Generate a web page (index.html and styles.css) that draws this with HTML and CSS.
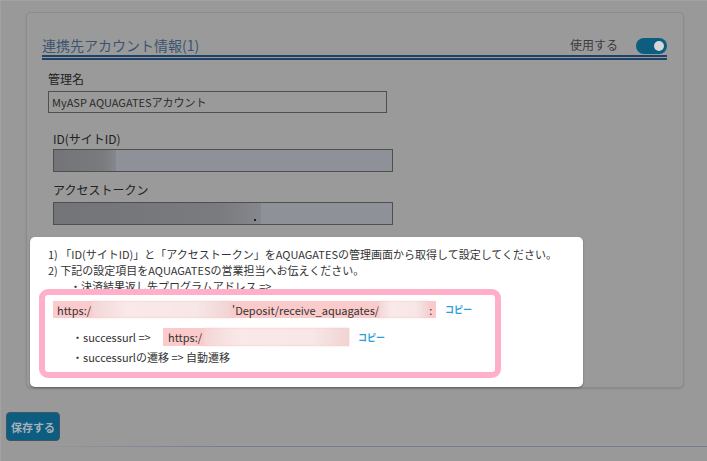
FILE: index.html
```html
<!DOCTYPE html>
<html lang="ja">
<head>
<meta charset="utf-8">
<title>連携先アカウント情報</title>
<link rel="stylesheet" href="styles.css">
</head>
<body>
<div class="page">
  <section class="card">
    <div class="card-head">
      <h2 class="card-title">連携先アカウント情報(1)</h2>
      <div class="use">
        <span class="use-label">使用する</span>
        <span class="toggle"><span class="knob"></span></span>
      </div>
    </div>
    <div class="field f-name">
      <label class="label">管理名</label>
      <div class="input">MyASP AQUAGATESアカウント</div>
    </div>
    <div class="field f-id">
      <label class="label">ID(サイトID)</label>
      <div class="input input-disabled"><span class="masked m-id"></span></div>
    </div>
    <div class="field f-token">
      <label class="label">アクセストークン</label>
      <div class="input input-disabled"><span class="masked m-token"></span><span class="dot"></span></div>
    </div>
  </section>
  <div class="footer"><button class="save">保存する</button></div>
  <div class="rule"></div>

  <div class="popover">
    <p class="pline">1) 「ID(サイトID)」と「アクセストークン」をAQUAGATESの管理画面から取得して設定してください。</p>
    <p class="pline">2) 下記の設定項目をAQUAGATESの営業担当へお伝えください。</p>
    <p class="pline indent">・決済結果返し先プログラムアドレス =&gt;</p>
    <div class="highlight">
      <div class="row row-url">
        <span class="url url1">https:/<span class="blur b1"></span>'Deposit/receive_aquagates/<span class="blur b2"></span>:</span>
        <span class="copy">コピー</span>
      </div>
      <div class="row row-success">
        <span class="item item-fixed">・successurl =&gt;</span>
        <span class="url url2">https:/<span class="blur b3"></span></span>
        <span class="copy">コピー</span>
      </div>
      <div class="row row-trans">
        <span class="item">・successurlの遷移 =&gt; 自動遷移</span>
      </div>
    </div>
  </div>
</div>
</body>
</html>
```

FILE: styles.css
```css
* { box-sizing: border-box; }

html, body {
  margin: 0;
  padding: 0;
}

body {
  background: #999999;
  font-family: "Noto Sans CJK JP", "Noto Sans", sans-serif;
  color: #222;
  min-height: 100vh;
  box-shadow: inset 1px 1px 0 #a2a2a2;
}

.page {
  position: relative;
  width: 707px;
  height: 461px;
  padding-top: 12px;
}

/* ---------- card ---------- */
.card {
  margin-left: 26px;
  width: 658px;
  height: 376px;
  background: #9a9a9a;
  border: 1px solid #8c8c8c;
  border-radius: 5px;
  box-shadow: 0 1px 2px rgba(0, 0, 0, 0.12);
  padding: 22px 16px 0 15px;
}

.card-head {
  display: flex;
  align-items: center;
  justify-content: space-between;
  height: 25px;
  padding-bottom: 0;
  border-bottom: 5px double #1f4368;
}

.card-title {
  margin: 0;
  font-size: 14px;
  font-weight: normal;
  line-height: 20px;
  color: #3a5571;
}

.use {
  display: flex;
  align-items: center;
}

.use-label {
  font-size: 12px;
  line-height: 20px;
  color: #3c3c3c;
  margin-right: 18px;
}

.toggle {
  position: relative;
  display: block;
  width: 31px;
  height: 16px;
  border-radius: 8px;
  background: #0c5d80;
  margin-top: 2px;
}

.knob {
  position: absolute;
  right: 3px;
  top: 3px;
  width: 10px;
  height: 10px;
  border-radius: 50%;
  background: #d6d6d6;
}

.field { display: block; }

.label {
  display: block;
  font-size: 12px;
  line-height: 18px;
  color: #222;
}

.input {
  display: flex;
  align-items: center;
  border: 1px solid #4f4f4f;
  font-size: 11px;
  color: #2b2a26;
  padding-left: 3px;
}

.f-name { margin: 10px 0 0 6px; }
.f-name .input { width: 339px; height: 22px; margin-top: 3px; }

.f-id { margin: 17px 0 0 11px; }
.f-id .input { width: 340px; height: 23px; margin-top: 1px; }

.f-token { margin: 9px 0 0 11px; }
.f-token .input { width: 340px; height: 23px; margin-top: 3px; }

.input-disabled {
  background: #8e9198;
  padding-left: 0;
  position: relative;
}

.masked {
  display: block;
  height: 100%;
  background: linear-gradient(90deg, #737478, #7a7b7f 80%, #85878c);
  filter: blur(0.6px);
}

.m-id { width: 62px; }
.m-token { width: 207px; }

.dot {
  position: absolute;
  left: 200px;
  bottom: 3px;
  width: 2px;
  height: 2px;
  background: #222;
}

/* ---------- footer ---------- */
.footer {
  margin: 24px 0 0 6px;
}

.save {
  display: block;
  width: 54px;
  height: 29px;
  border: 1px solid #3f5563;
  border-radius: 4px;
  background: #0c5d80;
  color: #a5b0ba;
  font-family: inherit;
  font-size: 11px;
  font-weight: bold;
  padding: 0;
}

.rule {
  margin-top: 5px;
  height: 1px;
  background: linear-gradient(90deg, rgba(115, 124, 152, 0) 30px, #737c98 220px);
}

/* ---------- popover ---------- */
.popover {
  position: absolute;
  left: 30px;
  top: 237px;
  width: 553px;
  height: 150px;
  background: #fff;
  border-radius: 5px;
  box-shadow: 0 1px 2px rgba(0, 0, 0, 0.35);
  padding-top: 9px;
  font-size: 11px;
  color: #333;
}

.pline {
  margin: 0;
  padding-left: 18px;
  line-height: 16px;
  white-space: nowrap;
}

.pline.indent { padding-left: 40px; }

.highlight {
  position: relative;
  margin: -5px 0 0 9px;
  width: 462px;
  height: 89px;
  border: 6px solid #ffafc7;
  border-radius: 9px;
  background: #fff;
  padding: 6px 0 0 8px;
}

.row {
  display: flex;
  align-items: center;
  white-space: nowrap;
}

.row-url { height: 17px; }
.row-success { height: 18px; margin-top: 10px; }
.row-trans { height: 16px; margin-top: 3px; }

.url {
  display: flex;
  align-items: center;
  height: 100%;
  background: #fbcaca;
  padding-left: 4px;
  color: #333;
}

.url1 { width: 383px; }
.url2 { width: 186px; padding-left: 5px; }

.blur {
  display: block;
  height: 100%;
  background: linear-gradient(90deg, #f4d6d6, #f9e9e9 25%, #f7e7e7 75%, #f1d3d3);
  filter: blur(0.8px);
}

.b1 { width: 139px; margin: 0 1px; }
.b2 { width: 49px; margin-right: 1px; }
.b3 { width: 148px; margin-left: 2px; }

.copy {
  margin-left: 9px;
  font-size: 9px;
  font-weight: bold;
  color: #2a9fd8;
}

.item {
  margin-left: 19px;
  color: #333;
}

.item-fixed { width: 91px; flex: none; }
```
